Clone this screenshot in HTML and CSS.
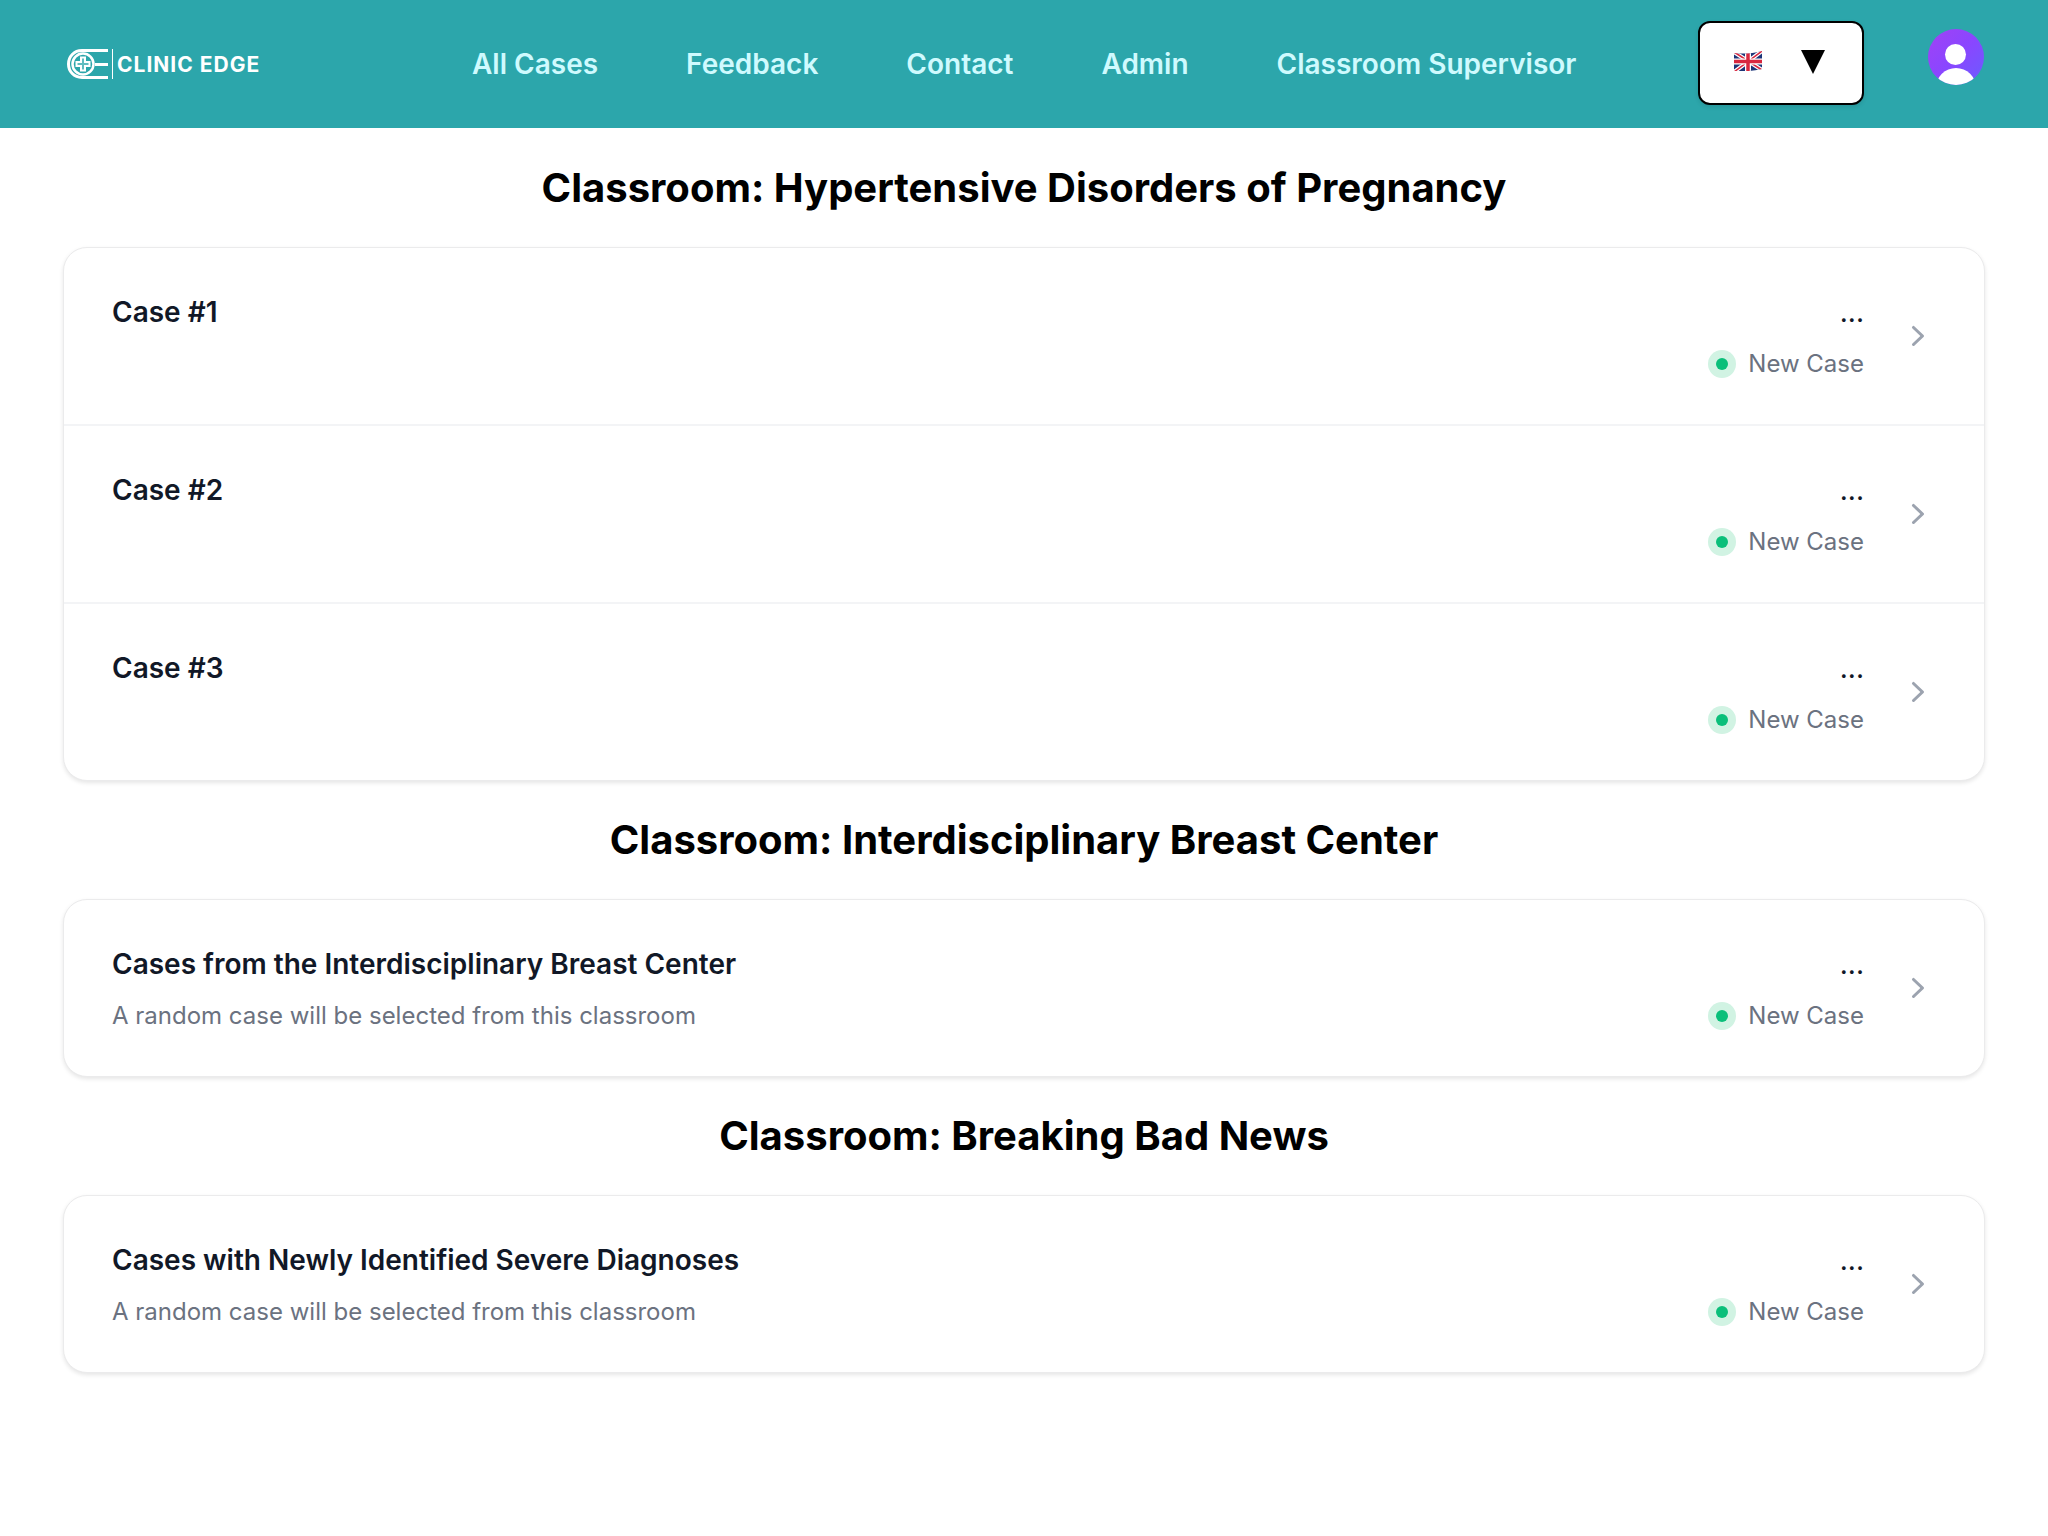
FILE: index.html
```html
<!DOCTYPE html>
<html lang="en">
<head>
    <meta charset="UTF-8">
    <title>Clinic Edge - Cases</title>
    <link rel="stylesheet" href="styles.css">
</head>
<body>

<header class="header">
    <a class="logo" href="#">
        <svg class="logo-mark" viewBox="0 0 41 30" width="41" height="30" fill="none" stroke="#fff">
            <path d="M41 1.500H15C7 1.500 1.500 7.500 1.500 15S7 28.500 15 28.500H41" stroke-width="3"/>
            <circle cx="16" cy="15" r="10.500" stroke-width="2.500"/>
            <path d="M14 8.500H18V13H22.500V17H18V21.500H14V17H9.500V13H14Z" fill="rgba(255,255,255,0.25)" stroke-width="2"/>
            <path d="M28 15.500H41" stroke-width="3"/>
        </svg>
        <span class="logo-line"></span>
        <span class="logo-text">CLINIC EDGE</span>
    </a>
    <nav class="nav">
        <a href="#">All Cases</a>
        <a href="#">Feedback</a>
        <a href="#">Contact</a>
        <a href="#">Admin</a>
        <a href="#">Classroom Supervisor</a>
    </nav>
    <div class="lang-select">
        <svg class="flag" viewBox="0 0 28 20" width="28" height="20">
            <defs><clipPath id="flagclip"><path d="M0 2C9 3 17 3 28 0V18C18 20 9 21 0 20Z"/></clipPath></defs>
            <g clip-path="url(#flagclip)">
                <rect width="28" height="22" fill="#1c3578"/>
                <path d="M0 1L28 19M28 0L0 21" stroke="#fff" stroke-width="4"/>
                <path d="M0 1L28 19M28 0L0 21" stroke="#d8273f" stroke-width="1.500"/>
                <path d="M14 0V22M0 10.500H28" stroke="#fff" stroke-width="6"/>
                <path d="M14 0V22M0 10.500H28" stroke="#d8273f" stroke-width="3.500"/>
            </g>
        </svg>
        <span class="caret"></span>
    </div>
    <div class="avatar">
        <span class="avatar-head"></span>
        <span class="avatar-body"></span>
    </div>
</header>

<main class="main">
    <h2 class="section-title">Classroom: Hypertensive Disorders of Pregnancy</h2>
    <ul class="card">
        <li class="row">
            <div class="row-info"><p class="row-title">Case #1</p></div>
            <div class="row-meta"><p class="dots">...</p><div class="status"><span class="status-dot"><span></span></span><p>New Case</p></div></div>
            <svg class="chevron" viewBox="0 0 20 20" fill="#9ca3af"><path fill-rule="evenodd" d="M7.210 14.770a.75.75 0 01.02-1.060L11.168 10 7.230 6.290a.75.75 0 111.040-1.080l4.500 4.250a.75.75 0 010 1.080l-4.500 4.250a.75.75 0 01-1.060-.02z" clip-rule="evenodd"/></svg>
        </li>
        <li class="row">
            <div class="row-info"><p class="row-title">Case #2</p></div>
            <div class="row-meta"><p class="dots">...</p><div class="status"><span class="status-dot"><span></span></span><p>New Case</p></div></div>
            <svg class="chevron" viewBox="0 0 20 20" fill="#9ca3af"><path fill-rule="evenodd" d="M7.210 14.770a.75.75 0 01.02-1.060L11.168 10 7.230 6.290a.75.75 0 111.040-1.080l4.500 4.250a.75.75 0 010 1.080l-4.500 4.250a.75.75 0 01-1.060-.02z" clip-rule="evenodd"/></svg>
        </li>
        <li class="row">
            <div class="row-info"><p class="row-title">Case #3</p></div>
            <div class="row-meta"><p class="dots">...</p><div class="status"><span class="status-dot"><span></span></span><p>New Case</p></div></div>
            <svg class="chevron" viewBox="0 0 20 20" fill="#9ca3af"><path fill-rule="evenodd" d="M7.210 14.770a.75.75 0 01.02-1.060L11.168 10 7.230 6.290a.75.75 0 111.040-1.080l4.500 4.250a.75.75 0 010 1.080l-4.500 4.250a.75.75 0 01-1.060-.02z" clip-rule="evenodd"/></svg>
        </li>
    </ul>

    <h2 class="section-title">Classroom: Interdisciplinary Breast Center</h2>
    <ul class="card">
        <li class="row">
            <div class="row-info">
                <p class="row-title">Cases from the Interdisciplinary Breast Center</p>
                <p class="row-sub">A random case will be selected from this classroom</p>
            </div>
            <div class="row-meta"><p class="dots">...</p><div class="status"><span class="status-dot"><span></span></span><p>New Case</p></div></div>
            <svg class="chevron" viewBox="0 0 20 20" fill="#9ca3af"><path fill-rule="evenodd" d="M7.210 14.770a.75.75 0 01.02-1.060L11.168 10 7.230 6.290a.75.75 0 111.040-1.080l4.500 4.250a.75.75 0 010 1.080l-4.500 4.250a.75.75 0 01-1.060-.02z" clip-rule="evenodd"/></svg>
        </li>
    </ul>

    <h2 class="section-title">Classroom: Breaking Bad News</h2>
    <ul class="card">
        <li class="row">
            <div class="row-info">
                <p class="row-title">Cases with Newly Identified Severe Diagnoses</p>
                <p class="row-sub">A random case will be selected from this classroom</p>
            </div>
            <div class="row-meta"><p class="dots">...</p><div class="status"><span class="status-dot"><span></span></span><p>New Case</p></div></div>
            <svg class="chevron" viewBox="0 0 20 20" fill="#9ca3af"><path fill-rule="evenodd" d="M7.210 14.770a.75.75 0 01.02-1.060L11.168 10 7.230 6.290a.75.75 0 111.040-1.080l4.500 4.250a.75.75 0 010 1.080l-4.500 4.250a.75.75 0 01-1.060-.02z" clip-rule="evenodd"/></svg>
        </li>
    </ul>
</main>

</body>
</html>
```

FILE: styles.css
```css
* {
    box-sizing: border-box;
}
body {
    font-family: Inter, "Liberation Sans", sans-serif;
    background-color: #fff;
    margin: 0;
}
p {
    margin: 0;
}
.header {
    display: flex;
    align-items: center;
    height: 128px;
    padding: 0 64px 0 67px;
    background-color: #2ca6ab;
}
.logo {
    display: flex;
    align-items: center;
    width: 205px;
    text-decoration: none;
    color: #fff;
}
.logo-mark {
    flex: none;
}
.logo-line {
    flex: none;
    width: 1px;
    height: 30px;
    margin: 0 4px;
    background-color: #fff;
}
.logo-text {
    font-size: 21px;
    font-weight: 700;
    letter-spacing: 1px;
    white-space: nowrap;
}
.nav {
    display: flex;
    gap: 88px;
    margin-left: 200px;
}
.nav a {
    font-size: 28px;
    font-weight: 600;
    line-height: 40px;
    color: #cffafe;
    text-decoration: none;
}
.lang-select {
    display: flex;
    align-items: center;
    width: 166px;
    height: 84px;
    margin-left: auto;
    margin-top: -2px;
    padding-left: 34px;
    background-color: #fff;
    border: 2px solid #000;
    border-radius: 12px;
    box-shadow: 0 2px 4px rgba(0, 0, 0, 0.1);
}
.flag {
    flex: none;
    margin-top: -4px;
}
.caret {
    width: 0;
    height: 0;
    margin-left: 39px;
    margin-top: -2px;
    border-left: 12px solid transparent;
    border-right: 12px solid transparent;
    border-top: 24px solid #000;
}
.avatar {
    position: relative;
    flex: none;
    width: 56px;
    height: 56px;
    margin-left: 64px;
    margin-top: -14px;
    overflow: hidden;
    border-radius: 50%;
    background: linear-gradient(135deg, #a142f5 0%, #8a46ff 50%, #6a5cff 100%);
}
.avatar-head {
    position: absolute;
    left: 17px;
    top: 15px;
    width: 21px;
    height: 21px;
    border-radius: 50%;
    background-color: #fff;
}
.avatar-body {
    position: absolute;
    left: 8px;
    top: 39px;
    width: 40px;
    height: 40px;
    border-radius: 50%;
    background-color: #fff;
}
.main {
    padding: 1px 63px 64px;
}
.section-title {
    margin: 0;
    padding: 35px 0;
    font-size: 40px;
    font-weight: 700;
    line-height: 48px;
    text-align: center;
    color: #000;
}
.card {
    margin: 0;
    padding: 0;
    list-style: none;
    background-color: #fff;
    border: 1px solid #ebebec;
    border-radius: 24px;
    box-shadow: 0 2px 4px rgba(0, 0, 0, 0.1);
}
.row {
    display: flex;
    align-items: center;
    height: 176px;
    padding: 0 46px 0 48px;
}
.row + .row {
    height: 178px;
    border-top: 2px solid #f3f4f6;
}
.row-info {
    align-self: flex-start;
    flex: 1;
    padding-top: 40px;
}
.row-title {
    font-size: 28px;
    font-weight: 600;
    line-height: 48px;
    color: #111827;
}
.row-sub {
    margin-top: 8px;
    font-size: 24px;
    line-height: 40px;
    color: #6b7280;
}
.row-meta {
    display: flex;
    flex-direction: column;
    align-items: flex-end;
}
.dots {
    font-size: 28px;
    line-height: 48px;
    color: #111827;
}
.status {
    display: flex;
    align-items: center;
    gap: 12px;
    margin-top: 8px;
    font-size: 24px;
    line-height: 40px;
    color: #6b7280;
}
.status-dot {
    display: flex;
    align-items: center;
    justify-content: center;
    width: 28px;
    height: 28px;
    border-radius: 50%;
    background-color: #d1f3e3;
}
.status-dot span {
    width: 12px;
    height: 12px;
    border-radius: 50%;
    background-color: #0abf7a;
}
.chevron {
    flex: none;
    width: 40px;
    height: 40px;
    margin-left: 34px;
}
```
